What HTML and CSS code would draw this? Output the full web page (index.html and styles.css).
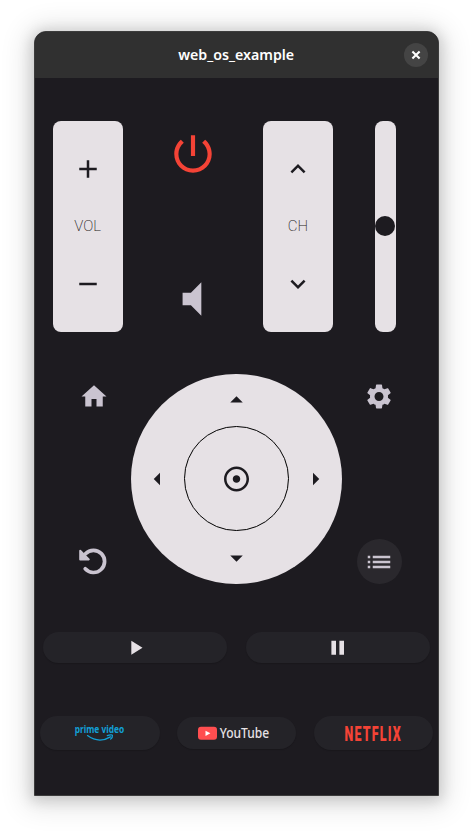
FILE: index.html
```html
<!DOCTYPE html>
<html lang="en">
<head>
<meta charset="utf-8">
<title>web_os_example</title>
<link rel="stylesheet" href="styles.css">
</head>
<body>
<div class="window">
  <header class="titlebar">
    <svg class="title" width="124" height="32"><text x="3.2" y="21" textLength="116" lengthAdjust="spacingAndGlyphs">web_os_example</text></svg>
    <button class="close" aria-label="Close"><svg width="10" height="10" viewBox="0 0 10 10"><path d="M1.4 1.4l7.2 7.2M8.6 1.4L1.4 8.6"/></svg></button>
  </header>
  <main class="remote">
    <section class="controls">
      <div class="rocker">
        <svg class="icon" viewBox="0 0 24 24"><path d="M19 13h-6v6h-2v-6H5v-2h6V5h2v6h6v2z"/></svg>
        <span>VOL</span>
        <svg class="icon" viewBox="0 0 24 24"><path d="M19 13H5v-2h14v2z"/></svg>
      </div>
      <div class="middle">
        <svg class="power" viewBox="0 0 24 24"><path d="M13 3h-2v10h2V3zm4.83 2.17l-1.42 1.42C17.99 7.86 19 9.81 19 12c0 3.87-3.13 7-7 7s-7-3.13-7-7c0-2.19 1.01-4.14 2.58-5.42L6.17 5.17C4.23 6.82 3 9.26 3 12c0 4.97 4.03 9 9 9s9-4.03 9-9c0-2.74-1.23-5.18-3.17-6.83z"/></svg>
        <svg class="mute" viewBox="0 0 24 24"><path d="M7 9v6h4l5 5V4l-5 5H7z"/></svg>
      </div>
      <div class="rocker">
        <svg class="icon" viewBox="0 0 24 24"><path d="M7.41 15.41L12 10.83l4.59 4.58L18 14l-6-6-6 6z"/></svg>
        <span>CH</span>
        <svg class="icon" viewBox="0 0 24 24"><path d="M7.41 8.59L12 13.17l4.59-4.58L18 10l-6 6-6-6z"/></svg>
      </div>
      <div class="slider"><div class="knob"></div></div>
    </section>

    <section class="navigation">
      <div class="side">
        <svg class="icon" viewBox="0 0 24 24"><path d="M10 20.4v-6h4v6h5v-8h3L12 3.4 2 12.4h3v8z"/></svg>
        <svg class="icon undo" viewBox="0 0 30 30"><path class="arc" d="M6.2 21.8A11.1 11.1 0 1 0 6.5 6.7"/><path class="head" d="M1.2 3.8L9.8 12.4H1.2z"/></svg>
      </div>
      <div class="dpad">
        <svg class="icon up" viewBox="0.4 0 24 24"><path d="M7 14l5-5 5 5z"/></svg>
        <svg class="icon left" viewBox="0.4 0 24 24"><path d="M14 7l-5 5 5 5V7z"/></svg>
        <div class="ok"><svg class="icon" viewBox="0.4 0 24 24"><path d="M12 2C6.49 2 2 6.49 2 12s4.49 10 10 10 10-4.49 10-10S17.51 2 12 2zm0 18c-4.41 0-8-3.59-8-8s3.59-8 8-8 8 3.59 8 8-3.59 8-8 8zm3-8c0 1.66-1.34 3-3 3s-3-1.34-3-3 1.34-3 3-3 3 1.34 3 3z"/></svg></div>
        <svg class="icon right" viewBox="0.4 0 24 24"><path d="M10 17l5-5-5-5v10z"/></svg>
        <svg class="icon down" viewBox="0.4 0 24 24"><path d="M7 10l5 5 5-5z"/></svg>
      </div>
      <div class="side">
        <svg class="icon" viewBox="0 -0.4 24 24"><path d="M19.14 12.94c.04-.3.06-.61.06-.94 0-.32-.02-.64-.07-.94l2.03-1.58c.18-.14.23-.41.12-.61l-1.92-3.32c-.12-.22-.37-.29-.59-.22l-2.39.96c-.5-.38-1.03-.7-1.62-.94l-.36-2.54c-.04-.24-.24-.41-.48-.41h-3.84c-.24 0-.43.17-.47.41l-.36 2.54c-.59.24-1.13.57-1.62.94l-2.39-.96c-.22-.08-.47 0-.59.22L2.74 8.87c-.12.21-.08.47.12.61l2.03 1.58c-.05.3-.09.63-.09.94s.02.64.07.94l-2.03 1.58c-.18.14-.23.41-.12.61l1.92 3.32c.12.22.37.29.59.22l2.39-.96c.5.38 1.03.7 1.62.94l.36 2.54c.05.24.24.41.48.41h3.84c.24 0 .44-.17.47-.41l.36-2.54c.59-.24 1.13-.56 1.62-.94l2.39.96c.22.08.47 0 .59-.22l1.92-3.32c.12-.22.07-.47-.12-.61l-2.01-1.58zM12 15.6c-1.98 0-3.6-1.62-3.6-3.6s1.62-3.6 3.6-3.6 3.6 1.62 3.6 3.6-1.62 3.6-3.6 3.6z"/></svg>
        <div class="menu"><svg class="icon" viewBox="0 0 24 24"><path d="M3 13h2v-2H3v2zm0 4h2v-2H3v2zm0-8h2V7H3v2zm4 4h14v-2H7v2zm0 4h14v-2H7v2zM7 7v2h14V7H7z"/></svg></div>
      </div>
    </section>

    <section class="playback">
      <button class="pill" aria-label="Play"><svg viewBox="0 0 24 24" width="24" height="24"><path d="M8.3 5.8v14l11.2-7z"/></svg></button>
      <button class="pill" aria-label="Pause"><svg viewBox="0 0 24 24" width="24" height="24"><path d="M5.4 19.8h4.6v-14H5.4v14zm8-14v14h4.6v-14h-4.6z"/></svg></button>
    </section>

    <section class="apps">
      <button class="pill"><svg class="prime" width="56" height="30" viewBox="-3 -6 56 30"><text x="-0.3" y="8.6" textLength="49.5" lengthAdjust="spacingAndGlyphs">prime video</text><path d="M12.5 11.6C20 17.1 28.5 17.1 35.5 12.9M32.3 11.6C34.5 10.7 37.3 10.5 37.4 11.3S36.8 14.2 35.7 15"/></svg></button>
      <button class="pill youtube"><svg width="84" height="28" viewBox="-3 -5 84 28"><rect x="0" y="2.8" width="19" height="13" rx="3"/><path d="M7.5 6.7v5.2l4.9-2.6z"/><text x="21.7" y="14.2" textLength="49.5" lengthAdjust="spacingAndGlyphs">YouTube</text></svg></button>
      <button class="pill netflix"><svg width="65" height="32" viewBox="-4 -7 65 32"><text x="-0.5" y="16.5" textLength="57.5" lengthAdjust="spacingAndGlyphs">NETFLIX</text></svg></button>
    </section>
  </main>
</div>
</body>
</html>
```
FILE: styles.css
```css
* { box-sizing: border-box; }
body { margin: 0; padding: 31px 34px 0; height: 833px; background: #fff; overflow: hidden; }
svg { display: block; flex: none; overflow: visible; }
button { border: 0; padding: 0; }
.window {
  width: 405px; height: 765px; overflow: hidden;
  background: #1d1b20; border: 1px solid #3c3c3c; border-radius: 12px 12px 0 0;
  box-shadow: 0 2px 14px 3px rgba(0,0,0,.15), 0 3px 28px 8px rgba(0,0,0,.11);
}
.titlebar {
  height: 46px; background: #303030; padding: 0 10px;
  display: grid; grid-template-columns: 1fr 124px 1fr; align-items: center;
}
.title { grid-column: 2; }
.title text { font: 600 14.5px "Noto Sans", sans-serif; fill: #fff; }
.close {
  width: 24px; height: 24px; justify-self: end; border-radius: 50%;
  background: #444; display: grid; place-items: center;
}
.close path { stroke: #fff; stroke-width: 2.1; fill: none; }
.icon { width: 30px; height: 30px; }
.controls { display: flex; margin-top: 43px; padding-left: 17.6px; height: 210.5px; }
.rocker {
  width: 70.2px; height: 100%; border-radius: 8px; background: #e6e1e5; color: #1d1b20;
  display: flex; flex-direction: column; align-items: center; justify-content: space-between;
  padding: 32.5px 0; font: 200 15px/20px Roboto, sans-serif;
}
.rocker .icon, .dpad .icon { fill: #1d1b20; }
.middle {
  width: 140px; display: flex; flex-direction: column; align-items: center;
  justify-content: space-between; padding: 8px 0;
}
.middle svg { width: 50px; height: 50px; }
.power { fill: #f44336; }
.mute { fill: #cac4d0; }
.slider {
  margin-left: 42.4px; width: 20.2px; border-radius: 8px; background: #e6e1e5;
  display: flex; align-items: center; justify-content: center;
}
.knob { width: 20px; height: 20px; border-radius: 50%; background: #1d1b20; }
.navigation { display: flex; margin-top: 42.2px; padding-left: 22px; height: 210.6px; }
.side {
  width: 74px; display: flex; flex-direction: column; align-items: center; justify-content: space-between;
  padding: 7.3px 0 0; fill: #cac4d0;
}
.undo { margin-bottom: 7.6px; }
.undo .arc { fill: none; stroke: #cac4d0; stroke-width: 3.7; stroke-linecap: round; }
.undo .head { stroke: #cac4d0; stroke-width: 2; stroke-linejoin: round; }
.menu { width: 45px; height: 45px; border-radius: 50%; background: #2a282d; display: grid; place-items: center; }
.dpad {
  width: 211px; border-radius: 50%; background: #e6e1e5;
  display: grid; grid-template: 52.8px 105px 52.8px / 53px 105px 53px; place-items: center;
}
.up { grid-area: 1 / 2; }
.left { grid-area: 2 / 1; }
.ok { grid-area: 2 / 2; width: 105px; height: 105px; border: 1px solid #000; border-radius: 50%; display: grid; place-items: center; }
.right { grid-area: 2 / 3; }
.down { grid-area: 3 / 2; }
.pill {
  background: #242328; border-radius: 20px; display: grid; place-items: center;
  box-shadow: 0 1px 1px rgba(0,0,0,.15);
}
.playback { display: grid; grid-template-columns: 184.3px 184.3px; gap: 18.5px; margin-top: 47.3px; padding-left: 8px; }
.playback .pill { height: 31px; fill: #e6e1e5; }
.apps { display: grid; grid-template-columns: repeat(3, 119.3px); gap: 17.3px; align-items: center; margin-top: 53.2px; padding-left: 5.4px; }
.apps .pill { height: 34.7px; }
.apps .youtube { height: 31.5px; }
.prime text { font: 700 9.8px "Noto Sans", sans-serif; fill: #12a0d7; }
.prime path { fill: none; stroke: #12a0d7; stroke-width: 1.3; stroke-linecap: round; }
.youtube rect { fill: #ff4e50; }
.youtube path { fill: #fff; }
.youtube text { font: 500 14px "Noto Sans", sans-serif; fill: #e6e1e5; }
.netflix text { font: 900 20.5px Roboto, sans-serif; letter-spacing: 2px; fill: #f44336; }
```
